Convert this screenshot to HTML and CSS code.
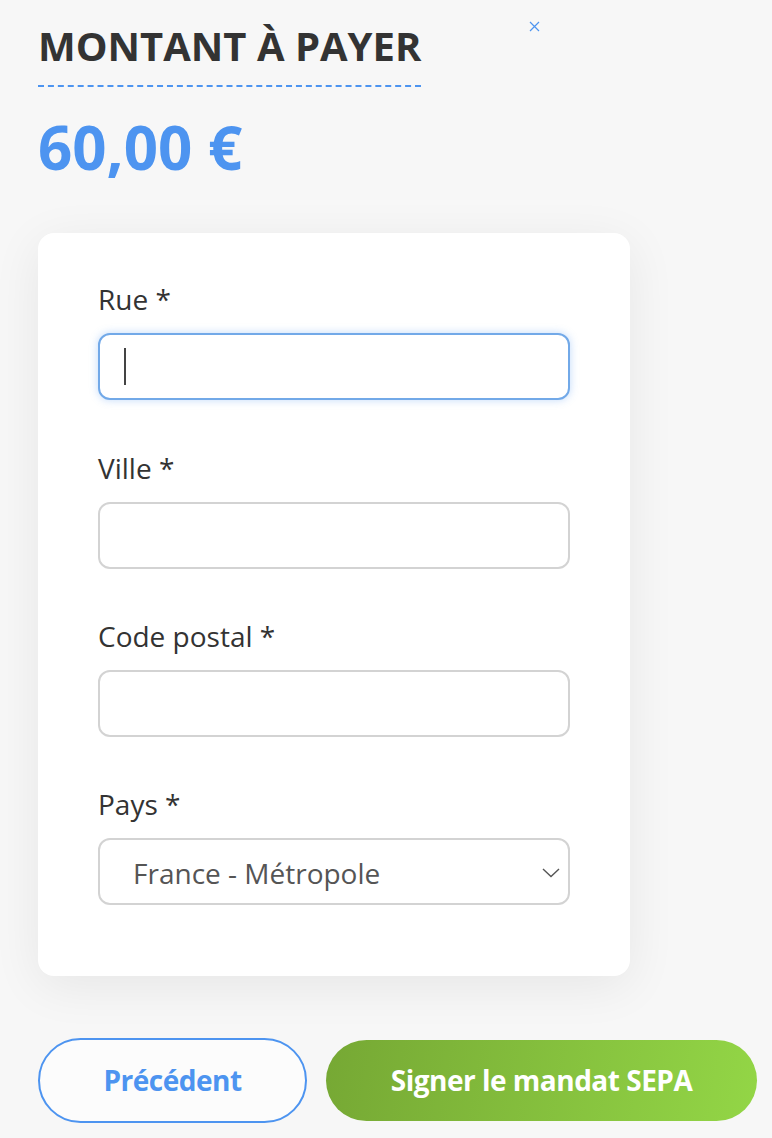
FILE: index.html
```html
<!DOCTYPE html>
<html lang="fr">
<head>
  <meta charset="UTF-8" />
  <meta name="viewport" content="width=device-width, initial-scale=1" />
  <title>Montant à payer</title>
  <link rel="stylesheet" href="styles.css">
</head>
<body>

<div class="page">
  <button class="close" type="button" aria-label="Fermer">
    <svg width="11" height="11" viewBox="0 0 11 11"><path d="M1 1 L10 10 M10 1 L1 10" stroke="#4d94f0" stroke-width="1.2" fill="none"/></svg>
  </button>

  <h1 class="title">MONTANT À PAYER</h1>
  <p class="amount">60,00 €</p>

  <form class="card">
    <div class="field">
      <label for="rue">Rue *</label>
      <div class="input focused"><span class="caret"></span></div>
    </div>
    <div class="field">
      <label for="ville">Ville *</label>
      <div class="input"></div>
    </div>
    <div class="field">
      <label for="cp">Code postal *</label>
      <div class="input"></div>
    </div>
    <div class="field">
      <label for="pays">Pays *</label>
      <div class="input select">
        <span>France - Métropole</span>
        <svg width="18" height="10" viewBox="0 0 18 10"><path d="M1 1 L9 8.5 L17 1" stroke="#555" stroke-width="1.4" fill="none"/></svg>
      </div>
    </div>
  </form>

  <div class="actions">
    <a href="#" class="btn btn-outline">Précédent</a>
    <a href="#" class="btn btn-green">Signer le mandat SEPA</a>
  </div>
</div>

</body>
</html>
```

FILE: styles.css
```css
body {
  margin: 0;
  background-color: #f7f7f7;
  font-family: "Open Sans", Arial, sans-serif;
  color: #333;
}
.page {
  position: relative;
  padding: 18px 15px 0 38px;
}
.close {
  position: absolute;
  left: 529px;
  top: 21px;
  background: none;
  border: none;
  padding: 0;
  line-height: 0;
  cursor: pointer;
}
.title {
  display: inline-block;
  margin: 0;
  font-size: 40px;
  font-weight: 700;
  color: #333;
  padding-bottom: 12px;
  border-bottom: 2px dashed #4d94f0;
}
.amount {
  margin: 20px 0 0;
  font-size: 60px;
  font-weight: 700;
  color: #4d94f0;
  line-height: 1.36;
}
.card {
  width: 472px;
  margin-top: 44px;
  padding: 47px 60px 71px;
  background-color: #fff;
  border-radius: 16px;
  box-shadow: 0 10px 50px rgba(0, 0, 0, 0.07);
}
.field {
  margin-bottom: 48px;
}
.field:nth-child(1) {
  margin-bottom: 49px;
}
.field:last-child {
  margin-bottom: 0;
}
.field label {
  display: block;
  font-size: 28px;
  line-height: 38px;
  margin-bottom: 15px;
  color: #333;
}
.input {
  box-sizing: border-box;
  height: 67px;
  border: 2px solid #d3d3d3;
  border-radius: 12px;
  background: #fff;
  display: flex;
  align-items: center;
  padding: 0 8px 0 33px;
}
.input.focused {
  border-color: #72a9e8;
  box-shadow: 0 0 8px rgba(77, 148, 240, 0.35);
  padding-left: 24px;
}
.caret {
  width: 2px;
  height: 37px;
  background: #444;
}
.select {
  justify-content: space-between;
  font-size: 28px;
  color: #555;
  padding-top: 4px;
}
.actions {
  display: flex;
  gap: 19px;
  margin-top: 62px;
}
.btn {
  box-sizing: border-box;
  height: 85px;
  border-radius: 43px;
  display: flex;
  align-items: center;
  justify-content: center;
  font-size: 28px;
  font-weight: 700;
  letter-spacing: -0.5px;
  text-decoration: none;
}
.btn-outline {
  flex: 0 0 269px;
  border: 2px solid #4d94f0;
  color: #4d94f0;
  background: #fcfcfc;
}
.btn-green {
  flex: 1;
  height: 81px;
  margin-top: 2px;
  color: #fff;
  background: linear-gradient(100deg, #76a834, #93d646);
}
```
